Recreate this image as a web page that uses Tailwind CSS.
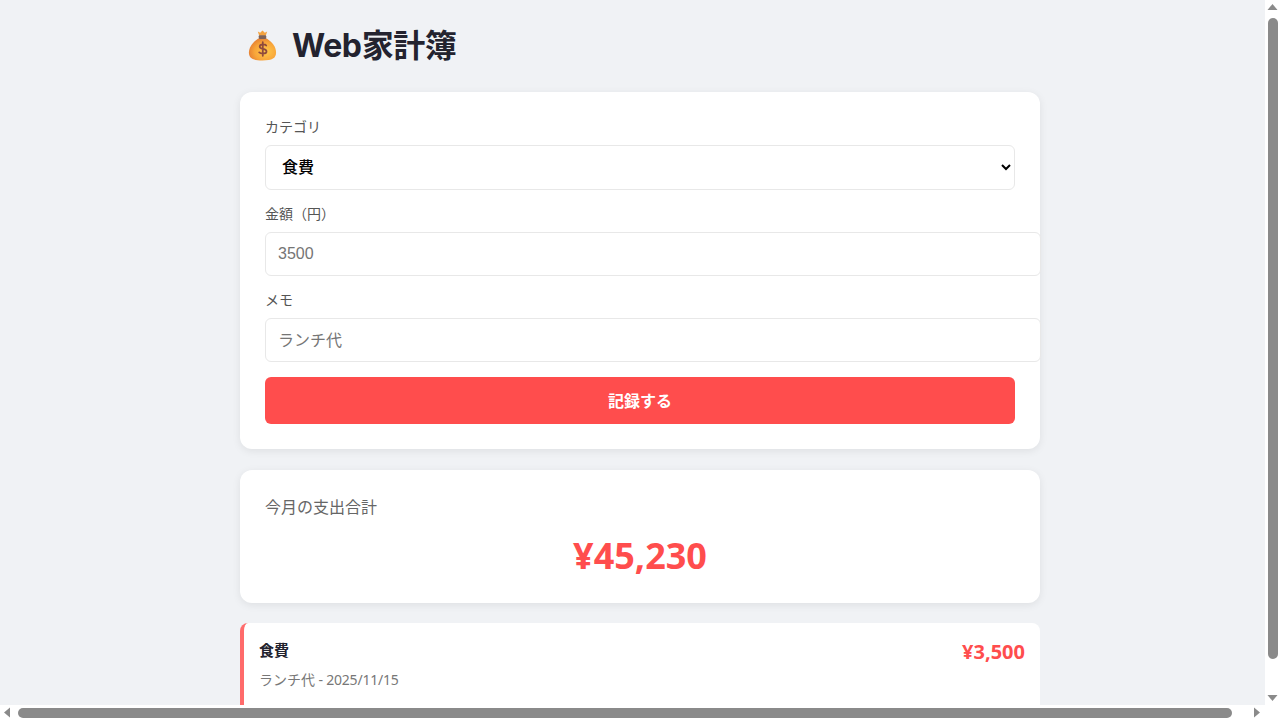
<!DOCTYPE html>
<html lang="ja">
<head>
<meta charset="utf-8">
<title>Web家計簿</title>
<script src="https://cdn.jsdelivr.net/npm/@tailwindcss/browser@4"></script>
</head>
<body class="overflow-hidden">
<div class="w-[1280px] h-[720px] flex flex-col overflow-hidden bg-white font-['Noto_Sans','Noto_Sans_CJK_JP',sans-serif] text-[#23232f]">
  <div class="flex h-[705px]">
    <main class="w-[1265px] h-[705px] overflow-hidden bg-[#f0f2f5]">
      <div class="w-[800px] ml-[240px] pt-5">
        <h1 class="flex items-center h-[50px] pl-[8px] mb-[22px] text-[32px] leading-[50px] font-bold tracking-[-0.4px] font-['Inter','Noto_Sans_CJK_JP',sans-serif]">
          <svg class="w-[29px] h-[31px] mr-[15px] shrink-0" viewBox="0 0 31 33" aria-hidden="true">
            <defs>
              <radialGradient id="bag" cx="0.62" cy="0.6" r="0.75">
                <stop offset="0" stop-color="#ffc94a"/><stop offset="0.55" stop-color="#f8a53a"/><stop offset="1" stop-color="#dd6f30"/>
              </radialGradient>
            </defs>
            <path d="M11 9C5 13 1 18 1 24c0 6 4 8.500 14.500 8.500S30 30 30 24c0-6-4-11-10-15z" fill="url(#bag)"/>
            <path d="M10.500 1.500l2.500 1.500L15.500.500 18 3l2.500-1.500L19 6h-7z" fill="#f3a23f"/>
            <rect x="11.500" y="5.500" width="8" height="4" rx="1" fill="#7d6258"/>
            <path d="M19.500 16.500c-1-1.500-6.800-2-7 1.200-.2 3.200 7.300 1.800 7.300 5.100 0 3-6.300 2.600-7.800 1M15.800 13v14.500" fill="none" stroke="#8f4a3c" stroke-width="1.900" stroke-linecap="round"/>
          </svg>
          <span class="pt-[2px]">Web家計簿</span>
        </h1>

        <section class="h-[357px] bg-white rounded-xl shadow-[0_2px_8px_rgba(0,0,0,0.08)] p-[25px] mb-[21px]">
          <form>
            <label class="block text-sm leading-5 text-[#555]">カテゴリ</label>
            <select class="block w-[750px] h-[44.500px] mt-2 px-3 border border-[#e8e8e8] rounded-md bg-white text-base font-medium text-black">
              <option>食費</option>
            </select>
            <label class="block mt-[14.500px] text-sm leading-5 text-[#555]">金額（円）</label>
            <input type="number" placeholder="3500" class="block w-[776px] h-[44px] mt-2 px-3 border border-[#e8e8e8] rounded-md bg-white text-base placeholder:text-[#757575] font-['Liberation_Sans',sans-serif]">
            <label class="block mt-[14px] text-sm leading-5 text-[#555]">メモ</label>
            <input type="text" placeholder="ランチ代" class="block w-[776px] h-[44px] mt-2 px-3 border border-[#e8e8e8] rounded-md bg-white text-base placeholder:text-[#757575]">
            <button type="button" class="block w-[750px] h-[47px] mt-[15px] rounded-md bg-[#ff4d4d] text-white text-base font-bold">記録する</button>
          </form>
        </section>

        <section class="h-[133px] bg-white rounded-xl shadow-[0_2px_8px_rgba(0,0,0,0.08)] px-[25px] pt-[25px] mb-5">
          <p class="text-base leading-6 text-[#666]">今月の支出合計</p>
          <p class="mt-[12px] text-center text-[36px] leading-[50px] font-bold text-[#ff4d4d]">¥45,230</p>
        </section>

        <article class="flex justify-between h-[100px] bg-white rounded-lg border-l-4 border-[#ff6b6b] pl-[15px] pr-[15px] pt-[15px]">
          <div>
            <p class="text-[15px] leading-6 font-semibold text-[#23232f]">食費</p>
            <p class="mt-[8px] text-sm leading-5 text-[#777]">ランチ代<span class="tracking-[-0.2px]"> - 2025/11/15</span></p>
          </div>
          <p class="text-[20px] leading-7 font-bold text-[#ff4d4d]">¥3,500</p>
        </article>
      </div>
    </main>
    <div class="w-[15px] h-[705px] flex flex-col items-center bg-white">
      <svg class="w-[15px] h-[15px] shrink-0" viewBox="0 0 15 15"><path d="M7.500 4l5 6h-10z" fill="#8a8a8a"/></svg>
      <div class="w-[10px] h-[641px] mt-[3px] rounded-full bg-[#8a8a8a]"></div>
      <svg class="w-[15px] h-[15px] mt-auto shrink-0" viewBox="0 0 15 15"><path d="M2.500 5h10l-5 6z" fill="#8a8a8a"/></svg>
    </div>
  </div>
  <div class="h-[15px] flex items-center bg-white">
    <svg class="w-[15px] h-[15px] shrink-0" viewBox="0 0 15 15"><path d="M4 7.500l6-5v10z" fill="#8a8a8a"/></svg>
    <div class="w-[1214px] h-[10px] ml-[3px] rounded-full bg-[#8a8a8a]"></div>
    <svg class="w-[15px] h-[15px] ml-[17px] shrink-0" viewBox="0 0 15 15"><path d="M5 2.500l6 5-6 5z" fill="#8a8a8a"/></svg>
  </div>
</div>
</body>
</html>
